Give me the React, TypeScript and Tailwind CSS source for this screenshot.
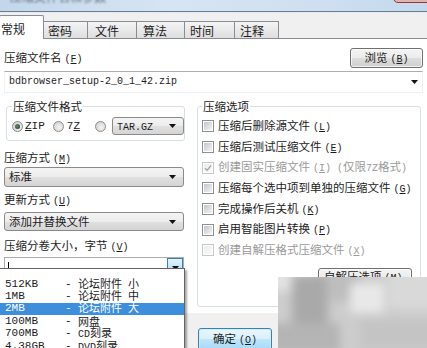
import React from 'react';

const ASCII = /^[\x20-\x7e]+$/;

// SimSun-style mix: CJK in Noto, ASCII runs in a narrow mono face
const Txt: React.FC<{ t: string; k?: string; suffix?: string }> = ({ t, k, suffix }) => {
  const parts = t.split(/([\x20-\x7e]+)/).filter((p) => p.length > 0);
  const sfx = suffix ? suffix.split(/([\x20-\x7e]+)/).filter((p) => p.length > 0) : [];
  return (
    <span className="whitespace-pre">
      {parts.map((p, i) =>
        ASCII.test(p) ? (
          <span key={i} className="font-['Liberation_Mono',monospace] text-[10px]">{p}</span>
        ) : (
          <span key={i}>{p}</span>
        )
      )}
      {k && (
        <span className="ml-[3px] font-['Liberation_Mono',monospace] text-[10px]">
          (<span className="underline underline-offset-1">{k}</span>)
        </span>
      )}
      {sfx.map((p, i) =>
        ASCII.test(p) ? (
          <span key={'s' + i} className="font-['Liberation_Mono',monospace] text-[10px]">{p}</span>
        ) : (
          <span key={'s' + i}>{p}</span>
        )
      )}
    </span>
  );
};

const Arrow = () => (
  <svg width="7" height="4" viewBox="0 0 7 4" className="shrink-0">
    <path d="M0 0h7L3.5 4z" fill="#111" />
  </svg>
);

const Select: React.FC<{ value: string; className?: string }> = ({ value, className }) => (
  <div
    className={`flex items-center justify-between rounded-[3px] border border-[#8a8a8a] bg-[linear-gradient(#f4f4f4,#ececec_50%,#e0e0e0_51%,#d4d4d4)] pl-[4px] pr-[7px] ${className ?? ''}`}
  >
    <Txt t={value} />
    <Arrow />
  </div>
);

const Radio: React.FC<{ on?: boolean }> = ({ on }) => (
  <span className="flex h-[11px] w-[11px] shrink-0 items-center justify-center rounded-full border border-[#8c8c8c] bg-[radial-gradient(circle_at_60%_60%,#f4f4f4,#c9c9c9)]">
    {on && <span className="h-[5px] w-[5px] rounded-full bg-[radial-gradient(circle_at_40%_40%,#6a8a70,#1e2e22)]" />}
  </span>
);

const Check: React.FC<{ label: string; k: string; suffix?: string; disabled?: boolean; checked?: boolean }> = ({
  label,
  k,
  suffix,
  disabled,
  checked,
}) => (
  <div className={`flex h-[20.7px] items-center pl-[4px] ${disabled ? 'text-[#9a9a9a]' : ''}`}>
    <span
      className={`flex h-[12px] w-[12px] shrink-0 items-center justify-center border p-px ${
        disabled ? 'border-[#c8c8c8] bg-white' : 'border-[#8e8f8f] bg-white'
      }`}
    >
      <span
        className={`relative h-full w-full ${
          disabled
            ? 'bg-[linear-gradient(135deg,#ececec,#fafafa)]'
            : 'bg-[linear-gradient(135deg,#c4c6ca,#f4f4f4)]'
        }`}
      >
        {checked && (
          <svg viewBox="0 0 8 8" className="absolute inset-0 h-full w-full">
            <path d="M1 4.2L3.2 6.3L7 1.5" fill="none" stroke="#a8a8a8" strokeWidth="1.4" />
          </svg>
        )}
      </span>
    </span>
    <span className="ml-[4px]">
      <Txt t={label} k={k} suffix={suffix} />
    </span>
  </div>
);

const Btn: React.FC<{ className?: string; children: React.ReactNode }> = ({ className, children }) => (
  <div
    className={`flex items-center justify-center rounded-[3px] border border-[#707070] bg-[linear-gradient(#f4f4f4,#ebebeb_50%,#dddddd_51%,#cfcfcf)] shadow-[inset_0_0_0_1px_rgba(255,255,255,0.7)] ${className ?? ''}`}
  >
    {children}
  </div>
);

const tabs = [
  { name: '密码', w: 'w-[44px] pl-[4px]' },
  { name: '文件', w: 'w-[49px] pl-[7px]' },
  { name: '算法', w: 'w-[48px] pl-[6px]' },
  { name: '时间', w: 'w-[50px] pl-[5px]' },
  { name: '注释', w: 'w-[44px] pl-[5px]' },
];

const sizes: [string, string][] = [
  ['512KB', '论坛附件 小'],
  ['1MB', '论坛附件 中'],
  ['2MB', '论坛附件 大'],
  ['100MB', '网盘'],
  ['700MB', 'CD刻录'],
  ['4.38GB', 'DVD刻录'],
];

export default function App() {
  return (
    <div className="relative h-[348px] w-[427px] overflow-hidden bg-[#f0f0f0] font-['Noto_Sans_CJK_SC',sans-serif] text-[11.5px] leading-none text-[#1c1c1c]">
      {/* title bar, mostly cropped off */}
      <div className="relative h-[11px] overflow-hidden bg-[linear-gradient(90deg,#c2d7ec,#d6e5f3_40%,#cfe0f1_70%,#c4d9ee)]">
        <span className="absolute left-[10px] top-[-9px] text-[12px] text-[#66707a] blur-[1px]">压缩文件名和参数</span>
        <div className="absolute right-[-6px] top-[-7px] h-[10px] w-[40px] rounded-bl-[5px] border border-[#8e3b3b] bg-[#e3b4ac]" />
      </div>
      <div className="h-px bg-[#6c7d8d]" />
      <div className="h-px bg-[#e4ebf2]" />

      {/* tab strip */}
      <div className="flex h-[25px] items-end">
        <div className="relative z-10 -mb-px -ml-px h-[24px] w-[45px] rounded-t-[2px] border border-b-0 border-[#898c95] bg-white pl-[1px] pt-[7px] text-[12px]">
          常规
        </div>
        {tabs.map((t) => (
          <div
            key={t.name}
            className={`h-[17px] border-r border-t border-[#898c95] bg-[linear-gradient(#f4f4f4,#e9e9e9_50%,#dedede)] pt-[3px] text-[12px] ${t.w}`}
          >
            {t.name}
          </div>
        ))}
      </div>

      {/* tab page */}
      <div className="h-[275px] border-t border-[#898c95] bg-white px-[4px] pt-[9px]">
        <div className="flex h-[20px] items-center justify-between">
          <Txt t="压缩文件名" k="F" />
          <Btn className="h-[20px] w-[73px]">
            <Txt t="浏览" k="B" />
          </Btn>
        </div>

        <div className="mt-[3px] flex h-[22px] items-center justify-between border border-[#eef1f4] border-t-[#abadb3] pl-[4px] pr-[4px]">
          <span className="font-['Liberation_Mono',monospace] text-[10px]">bdbrowser_setup-2_0_1_42.zip</span>
          <Arrow />
        </div>

        <div className="mt-[6px] flex">
          {/* left column */}
          <div className="flex w-[181px] flex-col">
            <fieldset className="ml-[2px] h-[42px] w-[179px] rounded-[3px] border border-[#d5dfe5]">
              <legend className="ml-[5px] px-[1px] leading-[14px]">压缩文件格式</legend>
              <div className="mt-[4px] flex h-[18px] items-center pl-[5px]">
                <Radio on />
                <span className="ml-[2px] font-['Liberation_Mono',monospace] text-[11px]">
                  <span className="underline">Z</span>IP
                </span>
                <span className="ml-[8px]">
                  <Radio />
                </span>
                <span className="ml-[3px] font-['Liberation_Mono',monospace] text-[11px]">
                  7<span className="underline">Z</span>
                </span>
                <span className="ml-[15px]">
                  <Radio />
                </span>
                <Select value="TAR.GZ" className="ml-[6px] h-[18px] w-[72px]" />
              </div>
            </fieldset>

            <div className="mt-[9px] leading-[14px]">
              <Txt t="压缩方式" k="M" />
            </div>
            <Select value="标准" className="h-[20px] w-[180px]" />

            <div className="mt-[5px] leading-[14px]">
              <Txt t="更新方式" k="U" />
            </div>
            <Select value="添加并替换文件" className="mt-[3px] h-[19px] w-[180px]" />

            <div className="mt-[7px] leading-[14px]">
              <Txt t="压缩分卷大小，字节" k="V" />
            </div>
            <div className="mt-[2px] flex h-[21px] w-[180px] items-stretch border border-[#abadb3] bg-white">
              <div className="flex flex-1 items-center pl-[3px]">
                <span className="h-[12px] w-px bg-black" />
              </div>
              <div className="flex w-[16px] items-center justify-center border border-[#3c7fb1] bg-[linear-gradient(#e5f4fc,#c4e5f6_50%,#98d1ef_51%,#68b3db)]">
                <Arrow />
              </div>
            </div>
          </div>

          {/* right column */}
          <fieldset className="ml-[12px] h-[208px] w-[224px] rounded-[3px] border border-[#d5dfe5]">
            <legend className="ml-[4px] px-[1px] leading-[14px]">压缩选项</legend>
            <div className="mt-[3px] flex flex-col">
              <Check label="压缩后删除源文件" k="L" />
              <Check label="压缩后测试压缩文件" k="E" />
              <Check label="创建固实压缩文件" k="I" suffix=" (仅限7Z格式)" disabled checked />
              <Check label="压缩每个选中项到单独的压缩文件" k="G" />
              <Check label="完成操作后关机" k="K" />
              <Check label="启用智能图片转换" k="P" />
              <Check label="创建自解压格式压缩文件" k="X" disabled />
            </div>
            <div className="mt-[7px] flex justify-end pr-[8px]">
              <Btn className="h-[20px] w-[94px] justify-start pl-[5px]">
                <Txt t="自解压选项" k="M" />
                <span className="font-['Liberation_Mono',monospace] text-[10px]">...</span>
              </Btn>
            </div>
          </fieldset>
        </div>
      </div>

      {/* dialog buttons */}
      <div className="flex pl-[198px] pt-[15px]">
        <div className="flex h-[22px] w-[74px] items-center justify-center rounded-[3px] border border-[#3c7fb1] bg-[linear-gradient(#eaf6fd,#d9f0fc_50%,#bee6fd_51%,#a7d9f5)] shadow-[inset_0_0_0_1px_#cdeeff]">
          <Txt t="确定" k="O" />
        </div>
      </div>

      {/* open dropdown list */}
      <div className="absolute left-[-1px] top-[268px] h-[90px] w-[186px] border border-[#646464] bg-white pt-[9px] text-[11px] shadow-[2px_2px_2px_rgba(0,0,0,0.35)]">
        {sizes.map(([s, d]) => (
          <div
            key={s}
            className={`flex h-[12.4px] items-center pl-[5px] ${s === '2MB' ? 'bg-[#3d8fdc] text-white' : ''}`}
          >
            <span className="w-[60px] font-['Liberation_Mono',monospace] text-[11px]">{s}</span>
            <span className="w-[13px] font-['Liberation_Mono',monospace] text-[11px]">-</span>
            <Txt t={d} />
          </div>
        ))}
      </div>

      {/* blurred patch over lower right */}
      <div className="absolute left-[278px] top-[277px] h-[71px] w-[149px] overflow-hidden bg-[#cdcdcd]">
        <div className="absolute inset-[-8px] blur-[5px]">
          <div className="absolute left-0 top-0 h-[22px] w-[40px] bg-[#e2e2e2]" />
          <div className="absolute left-[22px] top-[6px] h-[50px] w-[36px] bg-[#a9a9a9]" />
          <div className="absolute left-[60px] top-[2px] h-[30px] w-[30px] bg-[#bdbdbd]" />
          <div className="absolute left-[80px] top-[14px] h-[30px] w-[34px] bg-[#e8e8e8]" />
          <div className="absolute left-[118px] top-[0px] h-[40px] w-[50px] bg-[#d9d9d9]" />
          <div className="absolute left-[0px] top-[54px] h-[30px] w-[70px] bg-[#b4b4b4]" />
          <div className="absolute left-[90px] top-[50px] h-[30px] w-[80px] bg-[#c4c4c4]" />
        </div>
      </div>
    </div>
  );
}
